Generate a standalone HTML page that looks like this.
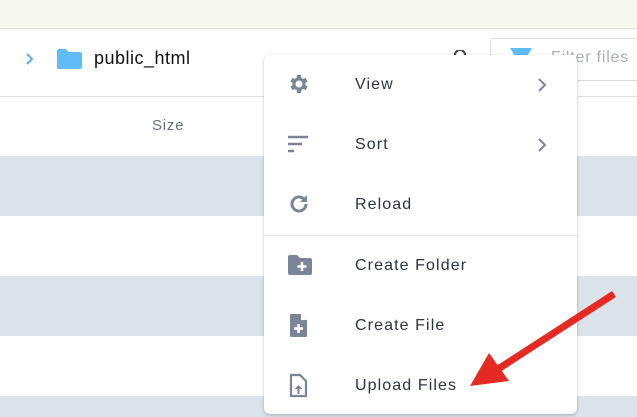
<!DOCTYPE html>
<html><head><style>
*{margin:0;padding:0;box-sizing:border-box}
html,body{width:637px;height:417px;overflow:hidden}
body{background:#fff;font-family:"Liberation Sans",sans-serif;position:relative}
.top{position:absolute;left:0;top:0;width:637px;height:29px;background:#f7f9f1;border-bottom:1px solid #e2e4e0}
.hdr{position:absolute;left:0;top:96px;width:637px;height:1px;background:#dfe3e8}
.row{position:absolute;left:0;width:637px;height:60px}
.g{background:#dde3ea}
.menu{position:absolute;left:264px;top:55px;width:313px;height:359px;background:#fff;border-radius:6px;box-shadow:0 1px 3px rgba(0,0,0,.25);overflow:hidden}
.it{position:absolute;left:0;width:313px;height:60px}
.it span{position:absolute;left:91px;top:21px;font-size:16px;color:#2d3340;letter-spacing:1.1px}
.it svg.ic{position:absolute;left:23px;top:17px}
.chev{position:absolute;left:272px;top:22px}
.sep{position:absolute;left:0;top:180px;width:313px;height:1px;background:#e0e3e8}
</style></head><body>
<div class="top"></div>
<svg style="position:absolute;left:25px;top:52px" width="10" height="14"><path d="M2 2l5 5-5 5" stroke="#5aaef5" stroke-width="2" fill="none"/></svg>
<svg style="position:absolute;left:56px;top:48px" width="28" height="22"><path d="M1 3a2 2 0 0 1 2-2h7l3 3h11a2 2 0 0 1 2 2v13a2 2 0 0 1-2 2H3a2 2 0 0 1-2-2z" fill="#5fbcf7"/></svg>
<div style="position:absolute;left:94px;top:48px;font-size:18px;color:#111;letter-spacing:.5px">public_html</div>
<svg style="position:absolute;left:453px;top:50px" width="14" height="6"><path d="M2 5a5 5 0 0 1 10 0" stroke="#444" stroke-width="2" fill="none"/></svg>
<div style="position:absolute;left:490px;top:38px;width:160px;height:43px;border:1px solid #d9dde2;border-radius:3px"></div>
<svg style="position:absolute;left:510px;top:48px" width="22" height="10"><path d="M0 0h22l-6 10H6z" fill="#5fbcf7"/></svg>
<div style="position:absolute;left:551px;top:49px;font-size:16px;color:#aab0b8;letter-spacing:.8px">Filter files</div>
<div class="hdr"></div>
<div style="position:absolute;left:152px;top:117px;font-size:15px;color:#6a7280;letter-spacing:.8px">Size</div>
<div class="row g" style="top:156px"></div>
<div class="row g" style="top:276px"></div>
<div class="row g" style="top:396px;height:21px"></div>
<div class="menu">
 <div class="it" style="top:0">
  <svg class="ic" width="24" height="24" viewBox="0 0 24 24"><path fill="#7c8597" d="M19.4 13a7.5 7.5 0 0 0 0-2l2.1-1.6-2-3.5-2.5 1a7 7 0 0 0-1.7-1L15 3h-4l-.4 2.9a7 7 0 0 0-1.7 1l-2.5-1-2 3.5L6.6 11a7.5 7.5 0 0 0 0 2l-2.1 1.6 2 3.5 2.5-1a7 7 0 0 0 1.7 1L11 21h4l.4-2.9a7 7 0 0 0 1.7-1l2.5 1 2-3.5zM13 15.5a3.5 3.5 0 1 1 0-7 3.5 3.5 0 0 1 0 7z" transform="translate(-1 0)"/></svg>
  <span>View</span>
  <svg class="chev" width="12" height="16"><path d="M3 2l6 6-6 6" stroke="#7c8597" stroke-width="2" fill="none"/></svg>
 </div>
 <div class="it" style="top:60px">
  <svg class="ic" width="26" height="26"><path d="M1 5h20M1 12h14M1 19h6" stroke="#7c8597" stroke-width="2.5"/></svg>
  <span>Sort</span>
  <svg class="chev" width="12" height="16"><path d="M3 2l6 6-6 6" stroke="#7c8597" stroke-width="2" fill="none"/></svg>
 </div>
 <div class="it" style="top:120px">
  <svg class="ic" width="24" height="24" viewBox="0 0 24 24"><path d="M19 12a7 7 0 1 1-2.1-5" stroke="#7c8597" stroke-width="3" fill="none"/><path d="M20 3v7h-7z" fill="#7c8597"/></svg>
  <span>Reload</span>
 </div>
 <div class="sep"></div>
 <div class="it" style="top:181px">
  <svg class="ic" width="26" height="26"><path d="M1 4a2 2 0 0 1 2-2h7l3 3h10a2 2 0 0 1 2 2v13a2 2 0 0 1-2 2H3a2 2 0 0 1-2-2z" fill="#7c8597"/><path d="M15 9v9M10.5 13.5h9" stroke="#fff" stroke-width="2.5"/></svg>
  <span>Create Folder</span>
 </div>
 <div class="it" style="top:241px">
  <svg class="ic" width="26" height="26"><path d="M4 1h10l6 6v16a1 1 0 0 1-1 1H4a1 1 0 0 1-1-1V2a1 1 0 0 1 1-1z" fill="#7c8597"/><path d="M14 1v6h6" fill="#fff"/><path d="M11.5 11v9M7 15.5h9" stroke="#fff" stroke-width="2.5"/></svg>
  <span>Create File</span>
 </div>
 <div class="it" style="top:301px">
  <svg class="ic" width="26" height="26"><path d="M4 2h9l6 6v15H4z" stroke="#7c8597" stroke-width="2.2" fill="none"/><path d="M11.5 12l-4 4h3v5h2v-5h3z" fill="#7c8597"/></svg>
  <span>Upload Files</span>
 </div>
</div>
<svg style="position:absolute;left:0;top:0" width="637" height="417"><path d="M614 294L495 371" stroke="#e52a24" stroke-width="7"/><path d="M470 386l19-33 20 28z" fill="#e52a24"/></svg>
</body></html>
